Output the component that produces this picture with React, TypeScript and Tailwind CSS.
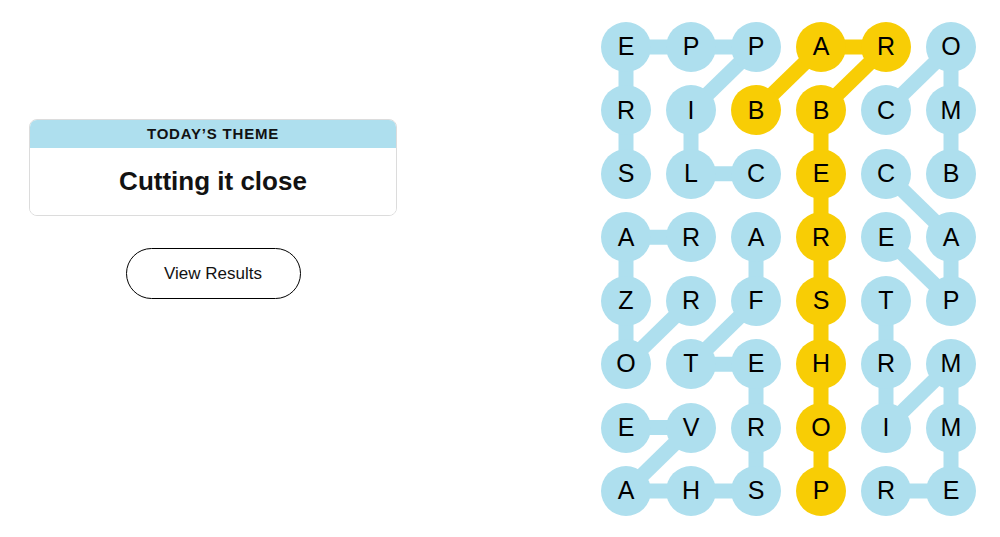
import React from 'react';

const GRID = [
  'EPPARO',
  'RIBBCM',
  'SLCECB',
  'ARAREA',
  'ZRFSTP',
  'OTEHRM',
  'EVROIM',
  'AHSPRE',
];

// cells of the spangram
const SPANGRAM = ['1,2', '0,3', '0,4', '1,3', '2,3', '3,3', '4,3', '5,3', '6,3', '7,3'];

// each word as a path of [row, col]
const WORDS: { path: [number, number][]; spangram?: boolean }[] = [
  { path: [[2, 0], [1, 0], [0, 0], [0, 1], [0, 2], [1, 1], [2, 1], [2, 2]] },
  { path: [[1, 4], [0, 5], [1, 5], [2, 5]] },
  { path: [[2, 4], [3, 5], [4, 5], [3, 4]] },
  { path: [[3, 1], [3, 0], [4, 0], [5, 0], [4, 1]] },
  {
    path: [[3, 2], [4, 2], [5, 1], [5, 2], [6, 2], [7, 2], [7, 1], [7, 0], [6, 1], [6, 0]],
  },
  { path: [[4, 4], [5, 4], [6, 4], [5, 5], [6, 5], [7, 5], [7, 4]] },
  {
    path: [[1, 2], [0, 3], [0, 4], [1, 3], [2, 3], [3, 3], [4, 3], [5, 3], [6, 3], [7, 3]],
    spangram: true,
  },
];

const COL_STEP = 65;
const ROW_STEP = 63.43;
const px = (c: number) => 25 + c * COL_STEP;
const py = (r: number) => 25 + r * ROW_STEP;

function Board() {
  return (
    <div className="relative">
      {/* connectors behind the letters */}
      <svg className="absolute inset-0 z-0" width={375} height={494} viewBox="0 0 375 494">
        {WORDS.map((w, i) =>
          w.path.slice(1).map(([r, c], j) => {
            const [r0, c0] = w.path[j];
            return (
              <line
                key={`${i}-${j}`}
                x1={px(c0)}
                y1={py(r0)}
                x2={px(c)}
                y2={py(r)}
                stroke={w.spangram ? '#f8cd05' : '#aedfee'}
                strokeWidth={15}
              />
            );
          })
        )}
      </svg>
      <div className="relative z-10 grid grid-cols-[repeat(6,50px)] gap-x-[15px] gap-y-[13.43px]">
        {GRID.map((row, r) =>
          row.split('').map((ch, c) => (
            <div
              key={`${r}-${c}`}
              className={`flex h-[50px] w-[50px] items-center justify-center rounded-full text-[25px] text-black ${
                SPANGRAM.includes(`${r},${c}`) ? 'bg-[#f8cd05]' : 'bg-[#aedfee]'
              }`}
            >
              {ch}
            </div>
          ))
        )}
      </div>
    </div>
  );
}

export default function App() {
  return (
    <div className="flex h-[537px] w-[1000px] justify-between bg-white pl-[29px] pr-[24px] font-['Liberation_Sans',Arial,sans-serif] text-[#121212]">
      <div className="flex w-[368px] flex-col items-center pt-[119px]">
        {/* Theme card */}
        <div className="w-full overflow-hidden rounded-lg border border-[#dcdcdc]">
          <div className="flex h-[28px] items-center justify-center bg-[#aedfee] text-[15px] font-bold tracking-[0.8px]">
            TODAY’S THEME
          </div>
          <div className="flex h-[67px] items-center justify-center bg-white pb-[1px] text-[26px] font-bold">
            Cutting it close
          </div>
        </div>

        <button className="mt-[32px] h-[51px] w-[175px] rounded-full border border-black bg-white text-[17px] text-[#121212]">
          View Results
        </button>
      </div>

      <div className="pt-[22px]">
        <Board />
      </div>
    </div>
  );
}
